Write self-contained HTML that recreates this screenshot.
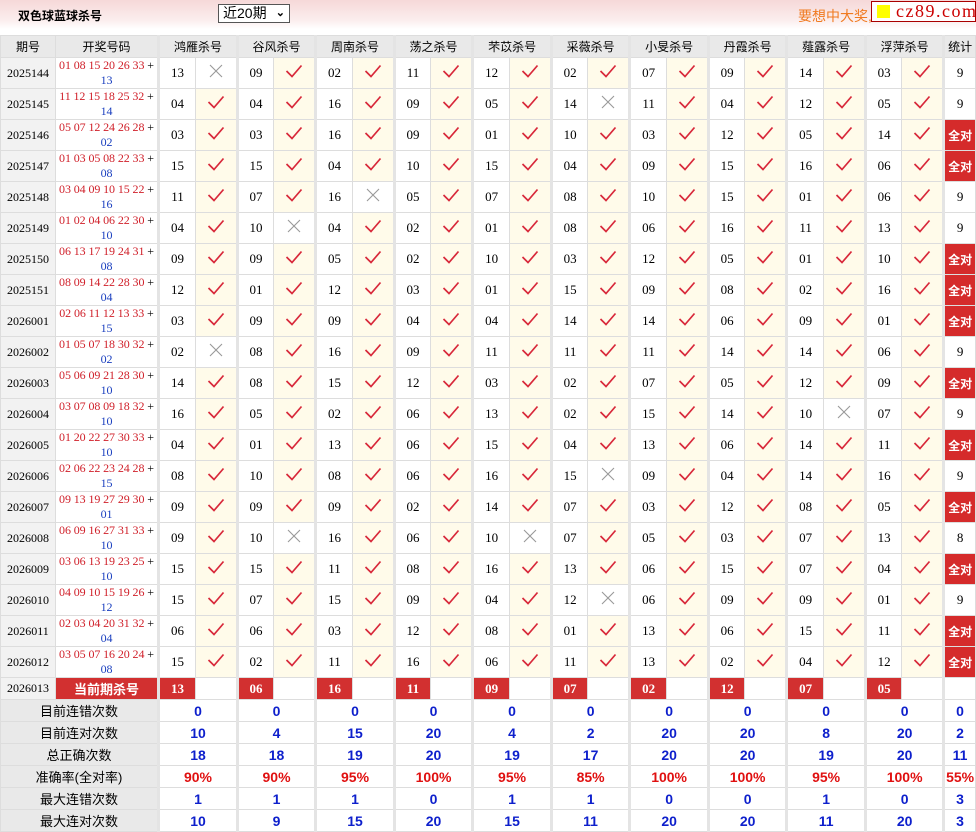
<!DOCTYPE html>
<html><head><meta charset="utf-8"><style>
*{margin:0;padding:0;box-sizing:border-box}
body{width:976px;height:830px;overflow:hidden;background:#fff;font-family:"Liberation Sans","Noto Sans CJK SC",sans-serif;font-size:12px;color:#000}
.top{height:29px;background:linear-gradient(#f6d8d8,#fbeeee 70%,#fff);position:relative}
.top .t{position:absolute;left:18px;top:7px;font-weight:bold;font-size:12px}
.top .sel{position:absolute;left:218px;top:4px;width:72px;height:19px;border:1px solid #555;background:#fff;font-size:14px;padding-left:4px;line-height:17px}
.top .sel b{position:absolute;right:4px;top:0;font-size:11px}
.top .ad{position:absolute;left:798px;top:6px;color:#f07a20;font-size:14px}
.top .logo{position:absolute;left:871px;top:1px;width:105px;height:21px;border:1px solid #a00;background:#fff;color:#c00;font-family:"Liberation Serif",serif;font-size:18px;line-height:18px;padding-left:24px;letter-spacing:1.5px}
.top .logo i{position:absolute;left:5px;top:3px;width:13px;height:13px;background:#ff0}
table{position:absolute;left:0;top:35px;border-collapse:collapse;table-layout:fixed;width:976px}
td{border:1px solid #ddd;text-align:center;padding:0;overflow:hidden;white-space:nowrap}
tr.h td{height:22px;background:#e9e9e9;font-size:12px}
tr.d td{height:31px;font-family:"Liberation Serif",serif;font-size:13px}
td.g{border-left:3px solid #e4e4e4}
td.ok{background:#fffbea}
td.p{background:#f2f2f2;font-size:12px!important}
td.n{line-height:15px;font-size:12px!important;letter-spacing:-0.1px}
.r{color:#d0202a}.b{color:#1a3fbf}
td.all{background:#d52b2b;color:#fff;font-weight:bold;font-family:"Liberation Sans","Noto Sans CJK SC",sans-serif!important;font-size:12px!important}
tr.c td{height:22px}
td.cr{background:#d23030;color:#fff;font-weight:bold;font-family:"Liberation Serif",serif;font-size:13px}
tr.s td{height:22px;font-weight:bold;color:#0d1fcc;font-size:14px}
tr.s td.l{background:#e9e9e9;color:#000;font-weight:normal;font-size:13px}
tr.s td.pc{color:#e01010}
</style></head><body>
<div class="top"><span class="t">双色球蓝球杀号</span><div class="sel">近20期<b>&#8964;</b></div><span class="ad">要想中大奖,</span><div class="logo"><i></i>cz89.com</div></div>
<table id="tb"></table>
<script>
var names=["鸿雁杀号","谷风杀号","周南杀号","荡之杀号","芣苡杀号","采薇杀号","小旻杀号","丹霞杀号","薤露杀号","浮萍杀号"];
var D=[
["2025144","01 08 15 20 26 33","13","13x 09 02 11 12 02 07 09 14 03","9"],
["2025145","11 12 15 18 25 32","14","04 04 16 09 05 14x 11 04 12 05","9"],
["2025146","05 07 12 24 26 28","02","03 03 16 09 01 10 03 12 05 14","A"],
["2025147","01 03 05 08 22 33","08","15 15 04 10 15 04 09 15 16 06","A"],
["2025148","03 04 09 10 15 22","16","11 07 16x 05 07 08 10 15 01 06","9"],
["2025149","01 02 04 06 22 30","10","04 10x 04 02 01 08 06 16 11 13","9"],
["2025150","06 13 17 19 24 31","08","09 09 05 02 10 03 12 05 01 10","A"],
["2025151","08 09 14 22 28 30","04","12 01 12 03 01 15 09 08 02 16","A"],
["2026001","02 06 11 12 13 33","15","03 09 09 04 04 14 14 06 09 01","A"],
["2026002","01 05 07 18 30 32","02","02x 08 16 09 11 11 11 14 14 06","9"],
["2026003","05 06 09 21 28 30","10","14 08 15 12 03 02 07 05 12 09","A"],
["2026004","03 07 08 09 18 32","10","16 05 02 06 13 02 15 14 10x 07","9"],
["2026005","01 20 22 27 30 33","10","04 01 13 06 15 04 13 06 14 11","A"],
["2026006","02 06 22 23 24 28","15","08 10 08 06 16 15x 09 04 14 16","9"],
["2026007","09 13 19 27 29 30","01","09 09 09 02 14 07 03 12 08 05","A"],
["2026008","06 09 16 27 31 33","10","09 10x 16 06 10x 07 05 03 07 13","8"],
["2026009","03 06 13 19 23 25","10","15 15 11 08 16 13 06 15 07 04","A"],
["2026010","04 09 10 15 19 26","12","15 07 15 09 04 12x 06 09 09 01","9"],
["2026011","02 03 04 20 31 32","04","06 06 03 12 08 01 13 06 15 11","A"],
["2026012","03 05 07 16 20 24","08","15 02 11 16 06 11 13 02 04 12","A"]];
var CK='<svg width="18" height="14" viewBox="0 0 18 14"><path d="M1.5 7 L7 12.5 L16.5 1.5" fill="none" stroke="#d8283a" stroke-width="1.7"/></svg>';
var XX='<svg width="16" height="16" viewBox="0 0 16 16"><path d="M2 2L14 14M14 2L2 14" stroke="#999" stroke-width="1.1"/></svg>';
var cg='';for(var i=0;i<10;i++)cg+='<col style="width:'+(i%2?36:37)+'px"><col style="width:42px">';cg+='<col>';
var h='<colgroup><col style="width:55px"><col style="width:103px">'+cg+'</colgroup>';
h+='<tr class="h"><td>期号</td><td>开奖号码</td>';names.forEach(function(n){h+='<td colspan="2" class="g">'+n+'</td>'});h+='<td class="g">统计</td></tr>';
D.forEach(function(r){h+='<tr class="d"><td class="p">'+r[0]+'</td><td class="n"><span class="r">'+r[1]+'</span> +<br><span class="b">'+r[2]+'</span></td>';
r[3].split(' ').forEach(function(v){var x=v.indexOf('x')>0;h+='<td class="g">'+v.replace('x','')+'</td><td'+(x?'':' class="ok"')+'>'+(x?XX:CK)+'</td>'});
h+=r[4]=='A'?'<td class="g all">全对</td>':'<td class="g">'+r[4]+'</td>';h+='</tr>'});
h+='<tr class="c"><td class="p" style="font-family:Liberation Serif,serif;font-size:12px">2026013</td><td style="background:#d23030;color:#fff;font-weight:bold;font-size:13px">当前期杀号</td>';
"13 06 16 11 09 07 02 12 07 05".split(' ').forEach(function(v){h+='<td class="g cr">'+v+'</td><td></td>'});h+='<td class="g"></td></tr>';
var S=[["目前连错次数","0 0 0 0 0 0 0 0 0 0 0"],["目前连对次数","10 4 15 20 4 2 20 20 8 20 2"],["总正确次数","18 18 19 20 19 17 20 20 19 20 11"],["准确率(全对率)","90% 90% 95% 100% 95% 85% 100% 100% 95% 100% 55%"],["最大连错次数","1 1 1 0 1 1 0 0 1 0 3"],["最大连对次数","10 9 15 20 15 11 20 20 11 20 3"]];
S.forEach(function(s,k){h+='<tr class="s"><td colspan="2" class="l">'+s[0]+'</td>';var v=s[1].split(' ');for(var i=0;i<11;i++)h+='<td class="g'+(k==3?' pc':'')+'"'+(i<10?' colspan="2"':'')+'>'+v[i]+'</td>';h+='</tr>'});
document.getElementById('tb').innerHTML=h;
</script>
</body></html>
